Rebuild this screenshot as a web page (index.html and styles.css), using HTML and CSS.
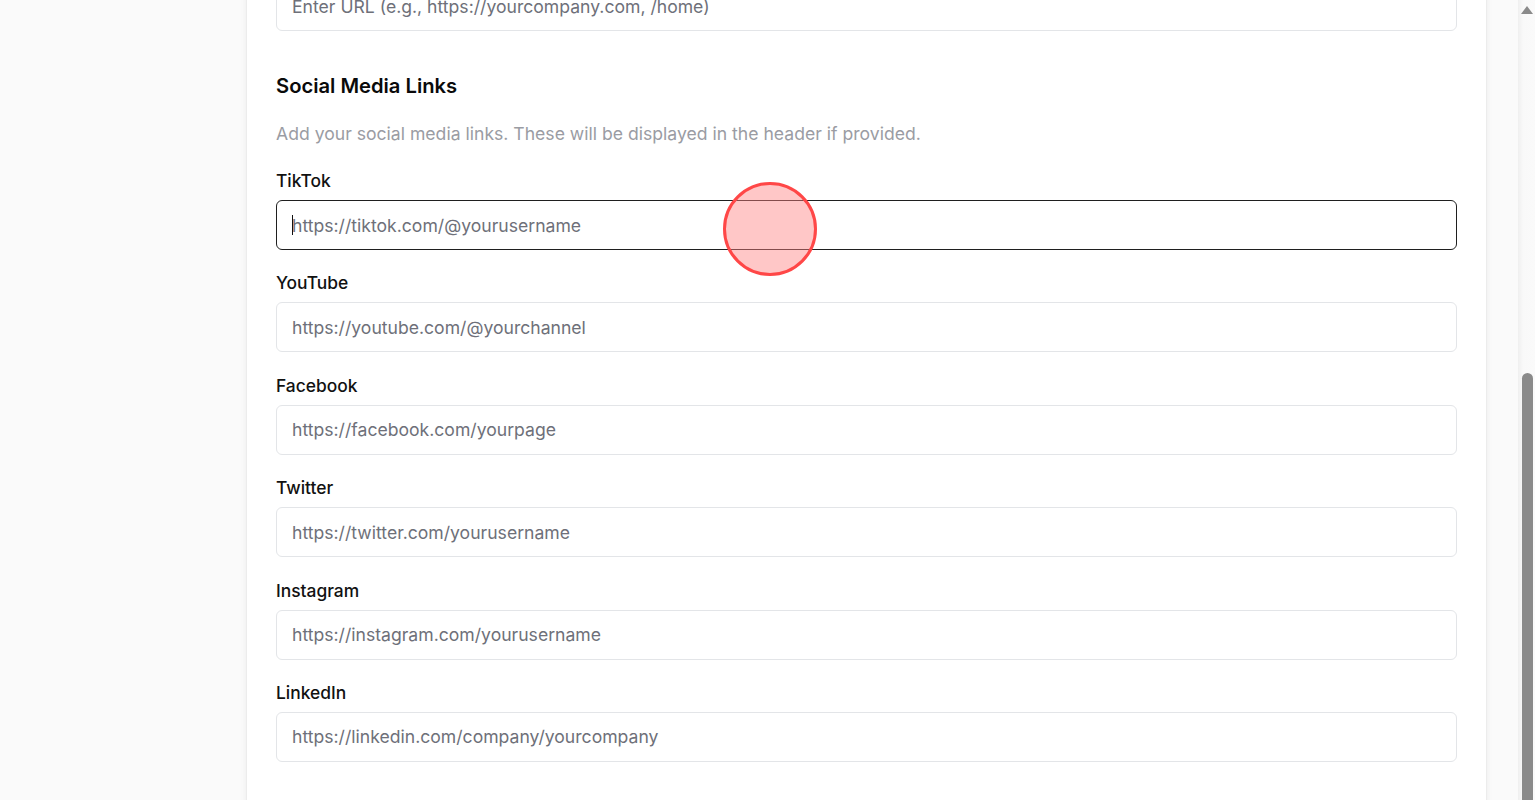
FILE: index.html
```html
<!DOCTYPE html>
<html>
<head>
<meta charset="utf-8">
<link rel="stylesheet" href="styles.css">
</head>
<body>
<div class="page">
  <div class="card">
    <div class="field first">
      <input class="input" type="text" placeholder="Enter URL (e.g., https://yourcompany.com, /home)">
    </div>
    <h2 class="section-title">Social Media Links</h2>
    <p class="section-desc">Add your social media links. These will be displayed in the header if provided.</p>
    <div class="field">
      <label class="label">TikTok</label>
      <div class="input-wrap">
        <input class="input focused" type="text" placeholder="https://tiktok.com/@yourusername">
        <span class="caret"></span>
      </div>
    </div>
    <div class="field">
      <label class="label">YouTube</label>
      <input class="input" type="text" placeholder="https://youtube.com/@yourchannel">
    </div>
    <div class="field">
      <label class="label">Facebook</label>
      <input class="input" type="text" placeholder="https://facebook.com/yourpage">
    </div>
    <div class="field">
      <label class="label">Twitter</label>
      <input class="input" type="text" placeholder="https://twitter.com/yourusername">
    </div>
    <div class="field">
      <label class="label">Instagram</label>
      <input class="input" type="text" placeholder="https://instagram.com/yourusername">
    </div>
    <div class="field">
      <label class="label">LinkedIn</label>
      <input class="input" type="text" placeholder="https://linkedin.com/company/yourcompany">
    </div>
  </div>
</div>
<div class="click-dot"></div>
<div class="scrollbar">
  <div class="arrow-up"></div>
  <div class="thumb"></div>
</div>
</body>
</html>
```
FILE: styles.css
```css
html, body {
  margin: 0;
  padding: 0;
  height: 100%;
  overflow: hidden;
}
body {
  background: #fafafa;
  font-family: Inter, "Open Sans", "Liberation Sans", sans-serif;
  color: #111111;
}
.page {
  display: flex;
  justify-content: flex-start;
  padding-left: 246px;
  width: 1241px;
  margin-top: -49px;
}
.card {
  width: 1241px;
  box-sizing: border-box;
  background: #ffffff;
  padding: 30px 29px 40px 29px;
  box-shadow: 0 0 6px rgba(0,0,0,0.06);
  border-left: 1px solid #ececec;
  border-right: 1px solid #ececec;
  display: flex;
  flex-direction: column;
  min-height: 900px;
}
.field {
  display: flex;
  flex-direction: column;
  margin-bottom: 20.4px;
}
.field.first { margin-bottom: 41px; }
.label {
  font-size: 17.4px;
  font-weight: 500;
  line-height: 24px;
  padding-top: 1px;
  margin-bottom: 7px;
  color: #111111;
}
.input-wrap { position: relative; display: flex; }
.input {
  width: 100%;
  height: 50px;
  box-sizing: border-box;
  border: 1px solid #e3e5e8;
  border-radius: 6px;
  padding: 0 15px;
  font-family: inherit;
  font-size: 17.6px;
  color: #111;
  background: #fff;
  outline: none;
}
.input::placeholder { color: #6e7079; }
.input.focused { border-color: #1f1f1f; }
.caret {
  position: absolute;
  left: 16px;
  top: 15px;
  width: 1px;
  height: 20px;
  background: #111;
}
.section-title {
  margin: 0;
  font-size: 20.2px;
  font-weight: 600;
  line-height: 28px;
  color: #0a0a0a;
}
.section-desc {
  margin: 22px 0 22px 0;
  font-size: 17.6px;
  line-height: 24px;
  color: #9a9ca3;
}
.click-dot {
  position: fixed;
  left: 723px;
  top: 182px;
  width: 88px;
  height: 88px;
  border-radius: 50%;
  border: 3px solid #ff4747;
  background: rgba(255, 130, 130, 0.45);
}
.scrollbar {
  position: fixed;
  top: 0;
  right: 0;
  width: 17px;
  height: 800px;
  background: linear-gradient(to right, #efefef, #f9f9f9 30%, #fafafa);
}
.arrow-up {
  position: absolute;
  left: 3px;
  top: 6px;
  width: 0;
  height: 0;
  border-left: 6px solid transparent;
  border-right: 6px solid transparent;
  border-bottom: 8px solid #8a8a8a;
}
.thumb {
  position: absolute;
  left: 4px;
  top: 373px;
  width: 11px;
  height: 440px;
  border-radius: 6px;
  background: #8a8a8a;
}
```
